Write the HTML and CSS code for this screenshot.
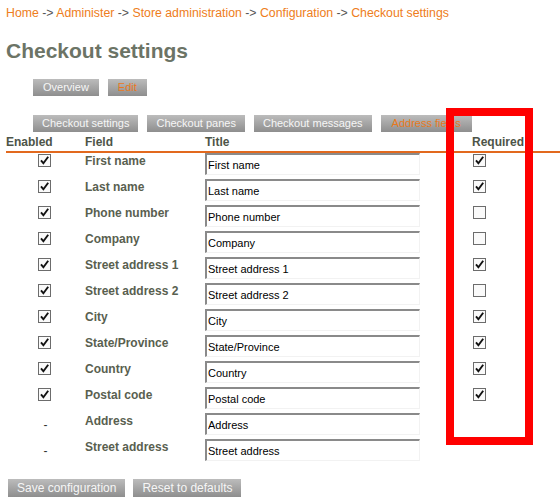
FILE: index.html
```html
<!DOCTYPE html>
<html>
<head>
<meta charset="utf-8">
<link rel="stylesheet" href="styles.css">
</head>
<body>
<svg class="defs" width="0" height="0">
  <symbol id="cb-on" viewBox="0 0 13 13">
    <rect x="0.5" y="0.5" width="12" height="12" fill="#fafafa" stroke="#6c6c6c"/>
    <path d="M3 6.3 L5.4 9.3 L10.2 2.8" fill="none" stroke="#111" stroke-width="1.9"/>
  </symbol>
  <symbol id="cb-off" viewBox="0 0 13 13">
    <rect x="0.5" y="0.5" width="12" height="12" fill="#fafafa" stroke="#6c6c6c"/>
  </symbol>
</svg>
<div class="page">
  <div class="breadcrumb"><a>Home</a> -&gt; <a>Administer</a> -&gt; <a>Store administration</a> -&gt; <a>Configuration</a> -&gt; <a>Checkout settings</a></div>
  <h1 class="title">Checkout settings</h1>
  <ul class="tabs primary">
    <li class="tab">Overview</li>
    <li class="tab active">Edit</li>
  </ul>
  <ul class="tabs secondary">
    <li class="tab">Checkout settings</li>
    <li class="tab">Checkout panes</li>
    <li class="tab">Checkout messages</li>
    <li class="tab active">Address fields</li>
  </ul>
  <table class="fields">
    <thead>
      <tr><th class="c-en">Enabled</th><th class="c-field">Field</th><th class="c-title">Title</th><th class="c-req">Required</th></tr>
    </thead>
    <tbody>
      <tr><td class="c-en"><svg class="cb"><use href="#cb-on"/></svg></td><td class="c-field">First name</td><td class="c-title"><input class="ti" type="text" value="First name"></td><td class="c-req"><svg class="cb"><use href="#cb-on"/></svg></td></tr>
      <tr><td class="c-en"><svg class="cb"><use href="#cb-on"/></svg></td><td class="c-field">Last name</td><td class="c-title"><input class="ti" type="text" value="Last name"></td><td class="c-req"><svg class="cb"><use href="#cb-on"/></svg></td></tr>
      <tr><td class="c-en"><svg class="cb"><use href="#cb-on"/></svg></td><td class="c-field">Phone number</td><td class="c-title"><input class="ti" type="text" value="Phone number"></td><td class="c-req"><svg class="cb"><use href="#cb-off"/></svg></td></tr>
      <tr><td class="c-en"><svg class="cb"><use href="#cb-on"/></svg></td><td class="c-field">Company</td><td class="c-title"><input class="ti" type="text" value="Company"></td><td class="c-req"><svg class="cb"><use href="#cb-off"/></svg></td></tr>
      <tr><td class="c-en"><svg class="cb"><use href="#cb-on"/></svg></td><td class="c-field">Street address 1</td><td class="c-title"><input class="ti" type="text" value="Street address 1"></td><td class="c-req"><svg class="cb"><use href="#cb-on"/></svg></td></tr>
      <tr><td class="c-en"><svg class="cb"><use href="#cb-on"/></svg></td><td class="c-field">Street address 2</td><td class="c-title"><input class="ti" type="text" value="Street address 2"></td><td class="c-req"><svg class="cb"><use href="#cb-off"/></svg></td></tr>
      <tr><td class="c-en"><svg class="cb"><use href="#cb-on"/></svg></td><td class="c-field">City</td><td class="c-title"><input class="ti" type="text" value="City"></td><td class="c-req"><svg class="cb"><use href="#cb-on"/></svg></td></tr>
      <tr><td class="c-en"><svg class="cb"><use href="#cb-on"/></svg></td><td class="c-field">State/Province</td><td class="c-title"><input class="ti" type="text" value="State/Province"></td><td class="c-req"><svg class="cb"><use href="#cb-on"/></svg></td></tr>
      <tr><td class="c-en"><svg class="cb"><use href="#cb-on"/></svg></td><td class="c-field">Country</td><td class="c-title"><input class="ti" type="text" value="Country"></td><td class="c-req"><svg class="cb"><use href="#cb-on"/></svg></td></tr>
      <tr><td class="c-en"><svg class="cb"><use href="#cb-on"/></svg></td><td class="c-field">Postal code</td><td class="c-title"><input class="ti" type="text" value="Postal code"></td><td class="c-req"><svg class="cb"><use href="#cb-on"/></svg></td></tr>
      <tr><td class="c-en dash">-</td><td class="c-field">Address</td><td class="c-title"><input class="ti" type="text" value="Address"></td><td class="c-req"></td></tr>
      <tr><td class="c-en dash">-</td><td class="c-field">Street address</td><td class="c-title"><input class="ti" type="text" value="Street address"></td><td class="c-req"></td></tr>
    </tbody>
  </table>
  <div class="actions">
    <button class="btn">Save configuration</button>
    <button class="btn">Reset to defaults</button>
  </div>
</div>
<div class="highlight"></div>
</body>
</html>
```
FILE: styles.css
```css
html, body {
  margin: 0;
  padding: 0;
  background: #fff;
}
body {
  font-family: "Liberation Sans", Arial, sans-serif;
  font-size: 12px;
  color: #555;
}
.defs {
  position: absolute;
  width: 0;
  height: 0;
}
.page {
  padding: 5px 0 0 6px;
}
.breadcrumb {
  font-size: 12.3px;
  line-height: 16px;
  color: #555;
}
.breadcrumb a {
  color: #ee7d20;
}
.title {
  margin: 17px 0 0 0;
  font-size: 21px;
  line-height: 25px;
  font-weight: bold;
  color: #6c7466;
}
.tabs {
  list-style: none;
  margin: 0;
  padding: 0 0 0 27px;
  display: flex;
  gap: 9px;
}
.tabs.primary {
  margin-top: 16px;
}
.tabs.secondary {
  margin-top: 19px;
}
.tab {
  height: 17px;
  line-height: 17px;
  padding: 0 9px;
  font-size: 11px;
  color: #f6f6f6;
  background: linear-gradient(#bcbcbc, #8e8e8e);
}
.tabs.primary .tab {
  padding: 0 10px;
}
.tabs.secondary .tab.active {
  padding: 0 11px;
}
.tab.active {
  color: #e8791c;
}
.fields {
  border-collapse: collapse;
  width: 554px;
}
.fields th {
  text-align: left;
  font-weight: bold;
  font-size: 12px;
  line-height: 14px;
  color: #4d5448;
  padding: 3px 0 2px 0;
  border-bottom: 2px solid #e2691e;
}
.fields td {
  vertical-align: top;
  padding: 0 0 4px 0;
  height: 22px;
}
.c-en { width: 79px; }
.c-field { width: 120px; }
.c-title { width: 267px; }
.fields td.c-en {
  text-align: center;
}
.fields td.c-field {
  font-weight: bold;
  font-size: 12px;
  line-height: 14px;
  color: #59604f;
  padding-top: 1px;
  padding-bottom: 3px;
  height: 22px;
}
.fields td.dash {
  color: #333;
  font-size: 12px;
  line-height: 14px;
  padding-top: 5px;
  padding-bottom: 3px;
  height: 18px;
}
.fields td.c-req {
  padding-left: 1px;
}
.cb {
  display: block;
  width: 13px;
  height: 13px;
  margin-top: 1px;
}
.fields td.c-en .cb {
  margin-left: auto;
  margin-right: auto;
  position: relative;
  left: -1px;
}
.ti {
  display: block;
  box-sizing: border-box;
  width: 215px;
  height: 22px;
  margin: 0;
  padding: 1px 1px 0 1px;
  font-family: "Liberation Sans", Arial, sans-serif;
  font-size: 11px;
  color: #000;
  background: #fff;
  border-top: 2px solid #8a8a8a;
  border-left: 2px solid #8a8a8a;
  border-right: 1px solid #f2f2f2;
  border-bottom: 1px solid #f2f2f2;
  outline: none;
}
.actions {
  display: flex;
  gap: 8px;
  margin: 14px 0 0 2px;
}
.btn {
  height: 18px;
  padding: 0 9px;
  border: none;
  font-family: "Liberation Sans", Arial, sans-serif;
  font-size: 12px;
  line-height: 18px;
  color: #f6f6f6;
  background: linear-gradient(#bcbcbc, #8e8e8e);
}
.highlight {
  position: absolute;
  left: 446px;
  top: 108px;
  width: 87px;
  height: 337px;
  box-sizing: border-box;
  border: 8px solid #ff0000;
  pointer-events: none;
}
```
